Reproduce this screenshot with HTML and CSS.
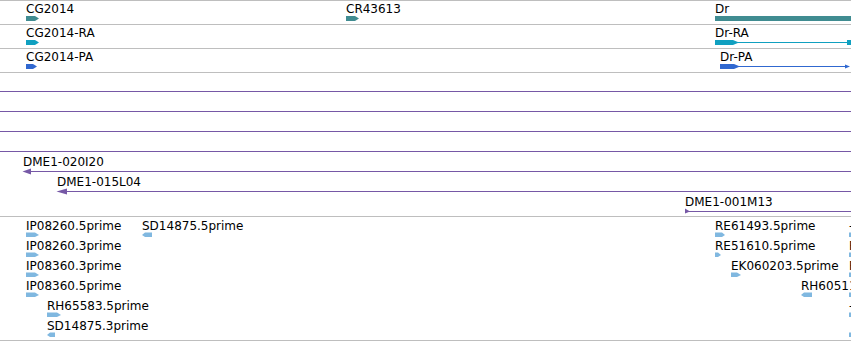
FILE: index.html
```html
<!DOCTYPE html>
<html>
<head>
<meta charset="utf-8">
<title>Genome browser tracks</title>
<link rel="stylesheet" href="styles.css">
</head>
<body>
<div class="browser">
  <section class="track genes">
    <div class="row">
      <svg class="lane" width="851" height="23" viewBox="0 0 851 23">
        <text class="lbl" x="26" y="12">CG2014</text>
        <polygon class="gene" points="26,15 35,15 39,17.5 35,20 26,20"/>
        <text class="lbl" x="346" y="12">CR43613</text>
        <polygon class="gene" points="346,15 355,15 359,17.5 355,20 346,20"/>
        <text class="lbl" x="715" y="12">Dr</text>
        <rect class="gene" x="715" y="15" width="136" height="5"/>
      </svg>
    </div>
    <div class="row">
      <svg class="lane" width="851" height="23" viewBox="0 0 851 23">
        <text class="lbl" x="26" y="12">CG2014-RA</text>
        <polygon class="mrna" points="26,15 35,15 39,17.5 35,20 26,20"/>
        <text class="lbl" x="715" y="12">Dr-RA</text>
        <polygon class="mrna" points="715,15 733,15 739,17.5 733,20 715,20"/>
        <rect class="mrna" x="737" y="17" width="111" height="1"/>
        <rect class="mrna" x="847" y="15" width="4" height="5"/>
      </svg>
    </div>
    <div class="row">
      <svg class="lane" width="851" height="23" viewBox="0 0 851 23">
        <text class="lbl" x="26" y="12">CG2014-PA</text>
        <polygon class="cds" points="26,15 33,15 37,17.5 33,20 26,20"/>
        <text class="lbl" x="720" y="12">Dr-PA</text>
        <polygon class="cds" points="720,15 734,15 740,17.5 734,20 720,20"/>
        <rect class="cds" x="738" y="17" width="110" height="1"/>
        <polygon class="cds" points="845,15.5 850,17.5 845,19.5"/>
      </svg>
    </div>
  </section>

  <section class="track bacs">
    <svg class="lane" width="851" height="143" viewBox="0 0 851 143">
      <rect class="bac" x="0" y="18" width="851" height="1"/>
      <rect class="bac" x="0" y="38" width="851" height="1"/>
      <rect class="bac" x="0" y="58" width="851" height="1"/>
      <rect class="bac" x="0" y="78" width="851" height="1"/>

      <text class="lbl" x="23" y="92.5">DME1-020I20</text>
      <rect class="bac" x="29" y="98" width="822" height="1"/>
      <polygon class="bac" points="22.5,98.5 31,95.5 31,101.5"/>

      <text class="lbl" x="57" y="112.5">DME1-015L04</text>
      <rect class="bac" x="63" y="118" width="788" height="1"/>
      <polygon class="bac" points="56.5,118.5 67,115.5 67,121.5"/>

      <text class="lbl" x="685" y="132.8">DME1-001M13</text>
      <rect class="bac" x="688" y="138" width="163" height="1"/>
      <polygon class="bac" points="685,135.5 690,138.5 685,140.5"/>
    </svg>
  </section>

  <section class="track ests">
    <svg class="lane" width="851" height="123" viewBox="0 0 851 123">
      <!-- row 0 -->
      <text class="lbl" x="26" y="13.4">IP08260.5prime</text>
      <polygon class="est" points="26,15.5 35,15.5 39,18 35,20 26,20"/>
      <text class="lbl" x="142" y="13.4">SD14875.5prime</text>
      <polygon class="est" points="152,15.5 145,15.5 142,18 145,20 152,20"/>
      <text class="lbl" x="715" y="13.4">RE61493.5prime</text>
      <polygon class="est" points="715,15.5 722,15.5 725,18 722,20 715,20"/>
      <text class="lbl" x="849" y="13.4">-</text>
      <rect class="est" x="849" y="15.5" width="2" height="4.5"/>

      <!-- row 1 -->
      <text class="lbl" x="26" y="33.4">IP08260.3prime</text>
      <polygon class="est" points="26,35.5 35,35.5 39,38 35,40 26,40"/>
      <text class="lbl" x="715" y="33.4">RE51610.5prime</text>
      <polygon class="est" points="715,35.5 718,35.5 721,38 718,40 715,40"/>
      <text class="lbl" x="849" y="33.4">RE</text>
      <rect class="est" x="849" y="35.5" width="2" height="4.5"/>

      <!-- row 2 -->
      <text class="lbl" x="26" y="53.4">IP08360.3prime</text>
      <polygon class="est" points="26,55.5 35,55.5 39,58 35,60 26,60"/>
      <text class="lbl" x="731" y="53.4">EK060203.5prime</text>
      <polygon class="est" points="731,55.5 737,55.5 741,58 737,60 731,60"/>
      <text class="lbl" x="849" y="53.4">RE</text>
      <rect class="est" x="849" y="55.5" width="2" height="4.5"/>

      <!-- row 3 -->
      <text class="lbl" x="26" y="73.4">IP08360.5prime</text>
      <polygon class="est" points="26,75.5 35,75.5 39,78 35,80 26,80"/>
      <text class="lbl" x="801" y="73.4">RH60511.5prime</text>
      <polygon class="est" points="812,75.5 804,75.5 801,78 804,80 812,80"/>
      <rect class="est" x="849" y="75.5" width="2" height="4.5"/>

      <!-- row 4 -->
      <text class="lbl" x="47" y="93.4">RH65583.5prime</text>
      <polygon class="est" points="47,95.5 57,95.5 61,98 57,100 47,100"/>
      <text class="lbl" x="849" y="93.4">-</text>
      <rect class="est" x="849" y="95.5" width="2" height="4.5"/>

      <!-- row 5 -->
      <text class="lbl" x="47" y="113.4">SD14875.3prime</text>
      <polygon class="est" points="55,115.5 50,115.5 47,118 50,120 55,120"/>
      <rect class="est" x="849" y="115.5" width="2" height="4.5"/>
    </svg>
  </section>
</div>
</body>
</html>
```

FILE: styles.css
```css
html, body {
  margin: 0;
  padding: 0;
  background: #ffffff;
}

.browser {
  width: 851px;
  height: 341px;
  overflow: hidden;
  font-family: "DejaVu Sans", "Liberation Sans", sans-serif;
}

.track {
  display: flex;
  flex-direction: column;
}

.row {
  border-top: 1px solid #bebebe;
  height: 23px;
}

.genes {
  border-bottom: 1px solid #bebebe;
}

.bacs {
  height: 143px;
}

.ests {
  border-top: 1px solid #bebebe;
  border-bottom: 1px solid #bebebe;
  height: 123px;
}

.lane {
  display: block;
}

.lbl {
  font-family: "DejaVu Sans", "Liberation Sans", sans-serif;
  font-size: 12px;
  fill: #000000;
}

.gene { fill: #408c91; }
.mrna { fill: #10a0c0; }
.cds  { fill: #3068d0; }
.bac  { fill: #7658a6; }
.est  { fill: #80b8e0; }
```
